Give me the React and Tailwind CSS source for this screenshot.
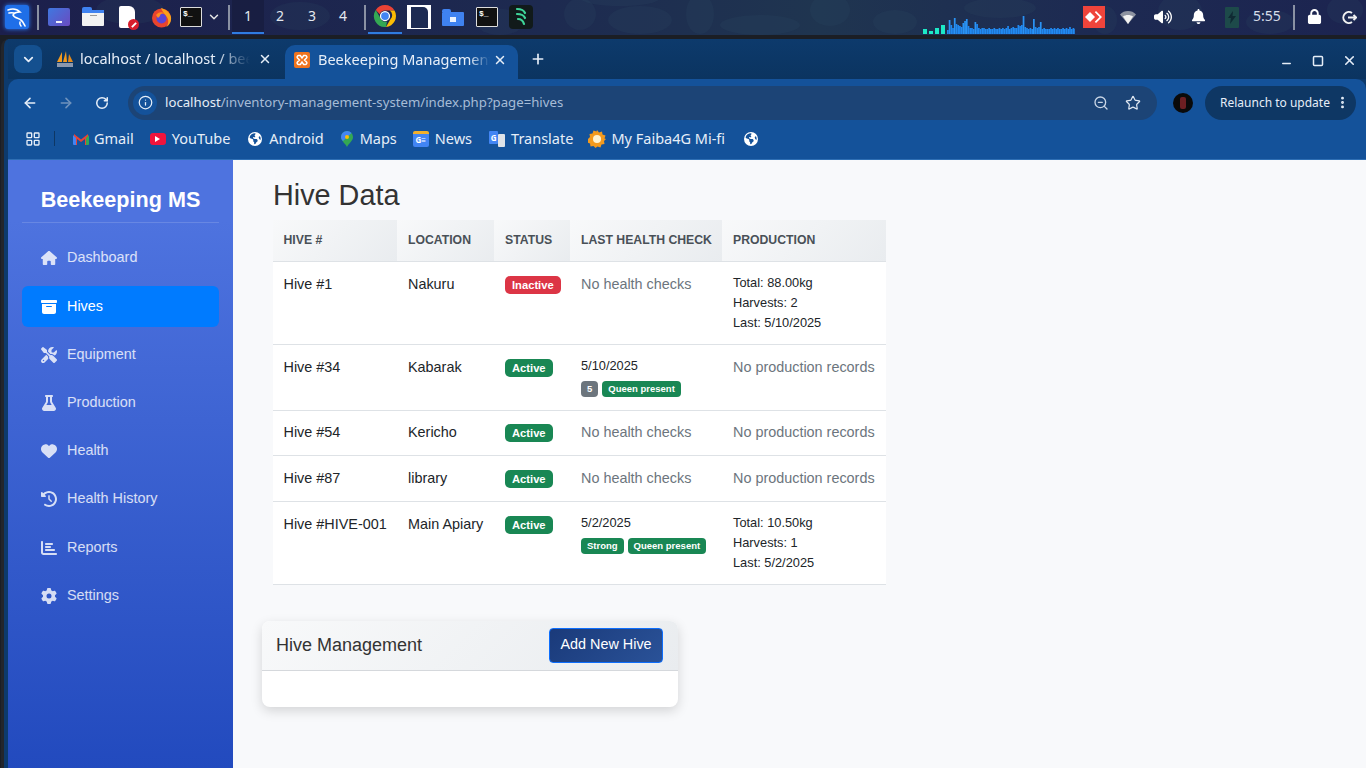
import React from "react";
import { ChevronDown, X, Plus, ArrowLeft, ArrowRight, RotateCw, Info, ZoomOut, Star, MoreVertical, Minus, Square, LayoutGrid } from "lucide-react";
import { FaHouse, FaBoxArchive, FaScrewdriverWrench, FaFlask, FaHeart, FaClockRotateLeft, FaChartBar, FaGear, FaEarthAmericas, FaLock, FaBell, FaVolumeHigh } from "react-icons/fa6";

const nav = [
  ["Dashboard", FaHouse, "h-[41px] mt-[14px]"],
  ["Hives", FaBoxArchive, "h-[41px] mt-[8px]"],
  ["Equipment", FaScrewdriverWrench, "h-[41px] mt-[7px]"],
  ["Production", FaFlask, "h-[41px] mt-[7px]"],
  ["Health", FaHeart, "h-[41px] mt-[7px]"],
  ["Health History", FaClockRotateLeft, "h-[41px] mt-[7px]"],
  ["Reports", FaChartBar, "h-[41px] mt-[8px]"],
  ["Settings", FaGear, "h-[41px] mt-[7px]"],
];

const bars = [4,14,9,6,16,10,9,8,7,11,13,15,8,6,6,5,12,10,6,5,6,6,5,5,6,5,5,6,5,5,6,5,6,5,6,8,5,6,7,6,6,9,8,9,18,7,6,5,6,5,15,7,6,7,12,5,6,5,5,5,6,5,6,5,6,5,5,6,5,6,5,7,5,6,5];

function Graph() {
  return (
    <svg width="152" height="18" viewBox="0 0 152 18" className="shrink-0 mt-[16px]">
      {[[0,5],[6,3],[12,6],[18,9]].map(([x,h],i)=><rect key={i} x={x} y={18-h} width="4" height={h} fill="#1de9c6"/>)}
      {bars.map((h,i)=><rect key={i} x={24+i*1.72} y={18-h} width="1.72" height={h} fill={h>10?"#2a93f5":"#2189f0"}/>)}
    </svg>
  );
}

function Wallpaper() {
  return (
    <svg className="absolute inset-0 pointer-events-none" width="1366" height="35" viewBox="0 0 1366 35">
      <g fill="#2f4a62" fillOpacity="0.2">
        <ellipse cx="640" cy="20" rx="32" ry="14"/><ellipse cx="620" cy="-2" rx="40" ry="8"/><ellipse cx="700" cy="14" rx="14" ry="20"/>
        <ellipse cx="760" cy="25" rx="40" ry="10"/><ellipse cx="830" cy="10" rx="20" ry="16"/><ellipse cx="895" cy="22" rx="22" ry="12"/>
        <ellipse cx="580" cy="14" rx="16" ry="16"/><ellipse cx="1000" cy="8" rx="36" ry="10"/><ellipse cx="1105" cy="20" rx="12" ry="14"/>
        <ellipse cx="1180" cy="12" rx="22" ry="18"/><ellipse cx="1270" cy="22" rx="24" ry="12"/><ellipse cx="1345" cy="10" rx="18" ry="14"/>
        <ellipse cx="500" cy="22" rx="24" ry="13"/><ellipse cx="130" cy="10" rx="34" ry="14"/><ellipse cx="300" cy="16" rx="30" ry="14"/>
      </g>
    </svg>
  );
}

function Kali() {
  return (
    <div className="absolute left-[5px] top-[5px] w-[24px] h-[24px] rounded-[3px] bg-[#1f6fe8] shadow-[0_0_4px_#2a7fff] flex items-center justify-center">
      <svg width="22" height="22" viewBox="0 0 22 22" fill="none" stroke="white" strokeWidth="1.6" strokeLinecap="round">
        <path d="M2 4c5-2 9-1 12 2-3 0-6 1-7 3 1 3 5 3 8 5 2 1.5 3 4 4 6"/><path d="M3 7c2-.5 3-.5 5 0"/><path d="M14 16c-.5 1.5 0 3 1 4"/>
      </svg>
    </div>
  );
}

function Chrome() {
  return (
    <svg width="24" height="24" viewBox="0 0 48 48">
      <path d="M24 2a22 22 0 0 1 19 11H24a11 11 0 0 0-10.400 7.400L5.500 12A22 22 0 0 1 24 2z" fill="#ea4335"/>
      <path d="M43 13a22 22 0 0 1-17 33l9.500-16.500a11 11 0 0 0-2-16.500z" fill="#fbbc04"/>
      <path d="M26 46A22 22 0 0 1 5.500 12l9.500 16.500a11 11 0 0 0 13 6.500z" fill="#34a853"/>
      <circle cx="24" cy="24" r="9" fill="#4285f4" stroke="white" strokeWidth="2.500"/>
    </svg>
  );
}

function Term({ x }) {
  return (
    <div style={{ left: x }} className="absolute top-[7px] w-[22px] h-[20px] bg-[#111] border border-[#ddd] rounded-[1px] font-['Liberation_Mono',monospace] text-[8px] leading-[12px] pl-[2px] text-white font-bold">$_</div>
  );
}

function Taskbar() {
  const seps = ["left-[37px]", "left-[228px]", "left-[364px]", "left-[1293px]"];
  return (
    <div className="relative h-[35px] shrink-0 bg-[linear-gradient(90deg,#1c1f4c_0%,#1d2a50_40%,#1f3550_60%,#1d2a52_80%,#1c2450_100%)] font-['Noto_Sans',sans-serif] text-[#e3e8ef]">
      <Wallpaper />
      <Kali />
      {seps.map((s) => <div key={s} className={`absolute top-[5px] h-[25px] w-[2px] bg-[#8a91a3] ${s}`} />)}
      <div className="absolute left-[48px] top-[8px] w-[22px] h-[18px] rounded-[2px] bg-[linear-gradient(135deg,#3f78e0,#6a4bc0)] flex items-end justify-center"><div className="w-[6px] h-[2px] mb-[3px] bg-white/90" /></div>
      <div className="absolute left-[82px] top-[7px] w-[22px] h-[20px]">
        <div className="w-[10px] h-[4px] rounded-t-[2px] bg-[#3f82f0]" />
        <div className="h-[3px] bg-[#3f82f0] -mt-[1px]" />
        <div className="h-[13px] bg-[#f2f2f2] rounded-b-[1px] flex justify-center"><div className="w-[7px] h-[1px] mt-[2px] bg-[#9a9a9a]" /></div>
      </div>
      <div className="absolute left-[119px] top-[6px] w-[16px] h-[22px] bg-white rounded-[2px] rounded-tr-[6px]" />
      <div className="absolute left-[128px] top-[19px] w-[11px] h-[11px] rounded-full bg-[#d81e2c] flex items-center justify-center"><div className="w-[6px] h-[2px] bg-white -rotate-45" /></div>
      <svg className="absolute left-[151px] top-[7px]" width="21" height="21" viewBox="0 0 21 21">
        <circle cx="10.500" cy="11" r="9.500" fill="#e8442d"/><path d="M10 1c4 1 9 4 10 9 .5 4-1 8-5 10 3-3 3-8 0-11-1-2-3-3-5-8z" fill="#f9a11b"/><circle cx="10.500" cy="11.500" r="5" fill="#5a45d6"/><path d="M5 8c2-3 6-4 9-1-3-1-5 0-5 2l-2 2z" fill="#ff8a1f"/>
      </svg>
      <Term x={180} />
      <ChevronDown size={14} strokeWidth={2.5} className="absolute left-[207px] top-[10px] text-[#e6e6e6]" />
      <div className="absolute left-[232px] top-0 h-[34px] w-[32px] bg-[#161b3a]/60 border-b-2 border-[#2f7ce0]" />
      {[["1","left-[232px]"],["2","left-[264px]"],["3","left-[296px]"],["4","left-[327px]"]].map(([n,c])=>(
        <div key={n} className={`absolute top-[6px] w-[32px] text-center text-[14px] leading-[20px] ${c}`}>{n}</div>
      ))}
      <div className="absolute left-[368px] top-0 h-[34px] w-[34px] border-b-2 border-[#2f7ce0] flex items-center justify-center pb-[1px]"><Chrome /></div>
      <div className="absolute left-[407px] top-[5px] w-[24px] h-[24px] bg-white flex items-center justify-center"><div className="w-[17px] h-[21px] bg-[#1c2a52] rounded-tr-[5px]" /></div>
      <div className="absolute left-[442px] top-[9px] w-[22px] h-[17px]">
        <div className="w-[9px] h-[3px] rounded-t-[2px] bg-[#3f82f0]" />
        <div className="h-[14px] bg-[#3f82f0] rounded-[1px] flex items-center justify-center"><div className="w-[6px] h-[5px] bg-white/90" /></div>
      </div>
      <Term x={476} />
      <div className="absolute left-[509px] top-[5px] w-[24px] h-[24px] rounded-[4px] bg-[#111a1a] flex items-center justify-center">
        <svg width="14" height="20" viewBox="0 0 14 20" fill="none" stroke="#3fd69a" strokeWidth="2.200" strokeLinecap="round"><path d="M3 2c4 0 7 1.500 8 4"/><path d="M3 7c4 0 7 1.500 8 4"/><path d="M4 12c3 0 5 1.500 6 5"/></svg>
      </div>
      <div className="absolute left-[923px] top-0"><Graph /></div>
      <div className="absolute left-[1083px] top-[6px] w-[22px] h-[22px] bg-[#ef443b] flex items-center justify-center">
        <svg width="18" height="12" viewBox="0 0 18 12" fill="white"><path d="M5 1l5 5-5 5-5-5z"/><path d="M11 0l6 6-6 6-1.200-1.200L14.500 6 9.800 1.200z"/></svg>
      </div>
      <svg className="absolute left-[1120px] top-[10px]" width="16" height="14" viewBox="0 0 16 14">
        <path d="M0 4.500C2 2 5 1 8 1s6 1 8 3.500L8 14z" fill="#8d93a1"/><path d="M3 6.500C4.500 5.500 6 5 8 5s3.500.5 5 1.500L8 14z" fill="#f2f2f2"/>
      </svg>
      <FaVolumeHigh size={18} className="absolute left-[1154px] top-[8px] text-white" />
      <FaBell size={15} className="absolute left-[1191px] top-[9px] text-white" />
      <div className="absolute left-[1225px] top-[7px] w-[14px] h-[21px] rounded-[1px] bg-[#1d4a4a] flex items-center justify-center">
        <svg width="8" height="13" viewBox="0 0 8 13" fill="#0f2a33"><path d="M5 0L0 7h3l-1 6 6-8H4.500z"/></svg>
      </div>
      <div className="absolute left-[1253px] top-[6px] text-[14px] leading-[20px] text-[#d6dee8]">5:55</div>
      <FaLock size={15} className="absolute left-[1307px] top-[9px] text-white" />
      <svg className="absolute left-[1342px] top-[10px]" width="15" height="15" viewBox="0 0 15 15" fill="none" stroke="#f2f2f2" strokeWidth="2"><path d="M10 3a5.500 5.500 0 1 0 0 9"/><path d="M6 7.500h8"/><path d="M11.500 5l2.500 2.500L11.500 10"/></svg>
    </div>
  );
}

function Pma() {
  return (
    <svg width="18" height="18" viewBox="0 0 18 18" className="shrink-0">
      <path d="M1 12L6 2v10z" fill="#f39a1e"/><path d="M7 12l3-11 1 11z" fill="#f39a1e"/><path d="M12 12l1-8 4 8z" fill="#e58a1a"/>
      <rect x="1" y="13" width="16" height="4" fill="#8a97ad"/>
    </svg>
  );
}

function Xampp() {
  return (
    <svg width="16" height="16" viewBox="0 0 16 16" className="shrink-0">
      <rect width="16" height="16" rx="2" fill="#f0741e"/>
      <path d="M4.500 3.500h1.800L8 6l1.700-2.500h1.800a1.500 1.500 0 0 1 1 2.500L10.500 8l2 2a1.500 1.500 0 0 1-1 2.500H9.700L8 10l-1.700 2.500H4.500a1.500 1.500 0 0 1-1-2.500l2-2-2-2a1.500 1.500 0 0 1 1-2.500z" fill="none" stroke="white" strokeWidth="1.500"/>
    </svg>
  );
}

function TabStrip() {
  return (
    <div className="relative h-[40px] shrink-0 flex items-start bg-[linear-gradient(180deg,#0d3a6c,#0b3460)] font-['Noto_Sans',sans-serif] text-[14.500px] text-[#e6eef8]">
      <div className="ml-[6px] mt-[6px] w-[28px] h-[28px] rounded-[8px] bg-[#14508f] flex items-center justify-center"><ChevronDown size={15} strokeWidth={2.8} /></div>
      <div className="ml-[14px] mt-[6px] w-[220px] h-[28px] flex items-center">
        <Pma />
        <span className="ml-[6px] w-[170px] whitespace-nowrap overflow-hidden [mask-image:linear-gradient(to_right,black_80%,transparent)]">localhost / localhost / beekeeping</span>
        <X size={14} strokeWidth={2.5} className="ml-[8px]" />
      </div>
      <div className="ml-[9px] mt-[6px] w-[233px] h-[34px] bg-[#14529a] rounded-t-[10px] flex items-center pl-[9px] pb-[4px]">
        <Xampp />
        <span className="ml-[8px] w-[172px] whitespace-nowrap overflow-hidden [mask-image:linear-gradient(to_right,black_88%,transparent)]">Beekeeping Management System</span>
        <X size={14} strokeWidth={2.5} className="ml-[3px]" />
      </div>
      <Plus size={16} strokeWidth={2.5} className="ml-[12px] mt-[12px]" />
      <div className="ml-auto flex items-center mt-[12px] mr-[9px]">
        <Minus size={13} strokeWidth={2.5} className="mr-[19px] mt-[6px]" />
        <Square size={12} strokeWidth={3} className="mr-[18px]" />
        <X size={15} strokeWidth={2.5} />
      </div>
    </div>
  );
}

function Toolbar() {
  return (
    <div className="h-[43px] shrink-0 flex items-center pt-[4px] bg-[#14529a] rounded-t-[10px] font-['Noto_Sans',sans-serif] text-[#e6eef8]">
      <ArrowLeft size={16} strokeWidth={2.4} className="ml-[14px]" />
      <ArrowRight size={16} strokeWidth={2.4} className="ml-[20px] text-[#6f92bd]" />
      <RotateCw size={14} strokeWidth={2.6} className="ml-[21px]" />
      <div className="ml-[19px] w-[1029px] h-[34px] rounded-full bg-[#1c4476] flex items-center pl-[5px]">
        <div className="w-[24px] h-[24px] rounded-full bg-[#14529a] flex items-center justify-center"><Info size={15} /></div>
        <span className="ml-[8px] text-[13.200px]">localhost<span className="text-[#a6bcd6]">/inventory-management-system/index.php?page=hives</span></span>
        <ZoomOut size={16} className="ml-auto text-[#c9d6e6]" />
        <Star size={16} strokeWidth={1.8} className="ml-[16px] mr-[16px] text-[#dfe7f1]" />
      </div>
      <div className="ml-[16px] w-[20px] h-[20px] rounded-full bg-[#0a0a0a] flex items-center justify-center"><div className="w-[6px] h-[12px] rounded-[2px] bg-[#6d1f22]" /></div>
      <div className="ml-[12px] w-[151px] h-[34px] rounded-full bg-[#0e3764] flex items-center pl-[15px] text-[12px]">
        Relaunch to update
        <MoreVertical size={15} strokeWidth={2.6} className="ml-[5px]" />
      </div>
    </div>
  );
}

function Bookmarks() {
  return (
    <div className="h-[38px] shrink-0 flex items-center pb-[4px] bg-[#14529a] border-b border-[#2f6fb4] font-['Noto_Sans',sans-serif] text-[14.500px] text-[#e6eef8]">
      <LayoutGrid size={16} className="ml-[17px]" />
      <div className="ml-[13px] w-[1px] h-[15px] bg-[#0e3764]" />
      <svg className="ml-[18px]" width="16" height="12" viewBox="0 0 16 12"><path d="M1 12V1l7 5.500L15 1v11h-3V6L8 9 4 6v6z" fill="#ea4335"/><path d="M0 2v9a1 1 0 0 0 1 1h2V5z" fill="#4285f4"/><path d="M16 2v9a1 1 0 0 1-1 1h-2V5z" fill="#34a853"/></svg>
      <span className="ml-[5px]">Gmail</span>
      <div className="ml-[16px] w-[16px] h-[12px] rounded-[3px] bg-[#f0143c] flex items-center justify-center"><div className="w-0 h-0 border-y-[3px] border-y-transparent border-l-[5px] border-l-white" /></div>
      <span className="ml-[6px]">YouTube</span>
      <FaEarthAmericas size={14} className="ml-[18px] text-white" />
      <span className="ml-[7px]">Android</span>
      <svg className="ml-[17px]" width="12" height="16" viewBox="0 0 12 16"><path d="M6 0a6 6 0 0 1 6 6c0 4-4 6-6 10C4 12 0 10 0 6a6 6 0 0 1 6-6z" fill="#34a853"/><path d="M6 0a6 6 0 0 1 4.500 2L2 10C.6 8.500 0 7.500 0 6a6 6 0 0 1 6-6z" fill="#4285f4"/><circle cx="6" cy="6" r="2" fill="#fbbc04"/></svg>
      <span className="ml-[7px]">Maps</span>
      <div className="ml-[16px] w-[16px] h-[16px] rounded-[2px] bg-[#4285f4] border-t-[3px] border-t-[#f3b02b] text-[8px] leading-[11px] font-bold text-center text-white">G≡</div>
      <span className="ml-[6px]">News</span>
      <div className="ml-[17px] flex w-[16px] h-[16px] shrink-0"><div className="w-[9px] h-[13px] bg-[#4285f4] rounded-[1px] text-[8px] leading-[13px] text-center font-bold text-white">G</div><div className="w-[7px] h-[13px] mt-[3px] bg-[#dfe3e8] rounded-[1px]" /></div>
      <span className="ml-[6px]">Translate</span>
      <svg className="ml-[15px]" width="18" height="18" viewBox="0 0 18 18"><path d="M9 0l2 2.500 3-1 .5 3 3 1-1 3L18 9l-2 2 .5 3-3 .5-1 3-3-1-2 1.500-2-2-3 .5-.5-3-3-1 1-3L0 9l2-2-.5-3 3-.5 1-3 3 1z" fill="#f39a1e"/><circle cx="9" cy="9" r="4" fill="#fff3d0"/></svg>
      <span className="ml-[5px]">My Faiba4G Mi-fi</span>
      <FaEarthAmericas size={14} className="ml-[19px] text-white" />
    </div>
  );
}

function Sidebar() {
  return (
    <aside className="w-[225px] shrink-0 h-full bg-[linear-gradient(180deg,#4e73df_10%,#224abe_100%)] px-[14px] font-['Liberation_Sans',sans-serif]">
      <div className="h-[63px] pt-[25px] text-center text-[21.600px] leading-[30px] font-bold text-white border-b border-white/15">Beekeeping MS</div>
      {nav.map(([label, Icon, cls]) => {
        const active = label === "Hives";
        return (
          <div key={label} className={`flex items-center pl-[19px] rounded-[6px] text-[14.400px] ${cls} ${active ? "bg-[#007bff] text-white" : "text-white/80"}`}>
            <span className="w-[16px] flex justify-center shrink-0"><Icon size={label === "Dashboard" ? 18 : 16} /></span>
            <span className="ml-[10px]">{label}</span>
          </div>
        );
      })}
    </aside>
  );
}

function Badge({ color, small, children }) {
  return (
    <span className={`inline-block font-bold text-white text-center ${color} ${small ? "text-[9.500px] leading-[16px] h-[16px] px-[6px] rounded-[4px]" : "text-[11.200px] leading-[18px] h-[18px] px-[7px] rounded-[5px]"}`}>{children}</span>
  );
}

const green = "bg-[#198754]", red = "bg-[#dc3545]", gray = "bg-[#6c757d]";
const Muted = ({ children }) => <span className="text-[#6c757d]">{children}</span>;
const Prod = ({ lines }) => <div className="text-[12.800px] leading-[20px] text-[#212529] -mt-[1px]">{lines.map((l) => <div key={l}>{l}</div>)}</div>;
const Health = ({ date, tags }) => (
  <div className="text-[12.800px] leading-[20px] text-[#212529] -mt-[1px]">
    <div>{date}</div>
    <div className="flex gap-[4px] mt-[5px]">{tags.map(([t, c]) => <Badge key={t} small color={c}>{t}</Badge>)}</div>
  </div>
);

const rows = [
  { h: "h-[83px]", id: "Hive #1", loc: "Nakuru", st: "Inactive", hc: <Muted>No health checks</Muted>, pr: <Prod lines={["Total: 88.00kg", "Harvests: 2", "Last: 5/10/2025"]} /> },
  { h: "h-[66px]", id: "Hive #34", loc: "Kabarak", st: "Active", hc: <Health date="5/10/2025" tags={[["5", gray], ["Queen present", green]]} />, pr: <Muted>No production records</Muted> },
  { h: "h-[45px]", id: "Hive #54", loc: "Kericho", st: "Active", hc: <Muted>No health checks</Muted>, pr: <Muted>No production records</Muted> },
  { h: "h-[46px]", id: "Hive #87", loc: "library", st: "Active", hc: <Muted>No health checks</Muted>, pr: <Muted>No production records</Muted> },
  { h: "h-[83px]", id: "Hive #HIVE-001", loc: "Main Apiary", st: "Active", hc: <Health date="5/2/2025" tags={[["Strong", green], ["Queen present", green]]} />, pr: <Prod lines={["Total: 10.50kg", "Harvests: 1", "Last: 5/2/2025"]} /> },
];

function HiveTable() {
  const th = "pl-[11px] first:pl-[10.500px] pr-[10px] text-left align-middle text-[12.240px] font-bold uppercase text-[#495057] bg-[linear-gradient(135deg,#f8f9fa,#e9ecef)] border-b border-[#dee2e6]";
  const td = "pl-[11px] first:pl-[10.500px] pr-[10px] align-top border-b border-[#dee2e6]";
  return (
    <table className="ml-[11px] w-[613px] table-fixed border-collapse bg-white text-[14.400px] leading-[20px] text-[#212529]">
      <colgroup><col className="w-[124px]" /><col className="w-[97px]" /><col className="w-[76px]" /><col className="w-[152px]" /><col className="w-[164px]" /></colgroup>
      <thead>
        <tr className="h-[41px]">
          {["Hive #", "Location", "Status", "Last Health Check", "Production"].map((t) => <th key={t} className={`${th} whitespace-nowrap`}>{t}</th>)}
        </tr>
      </thead>
      <tbody>
        {rows.map((r) => {
          const pad = r.id === "Hive #54" ? "pt-[11px]" : "pt-[12px]";
          return (
            <tr key={r.id} className={r.h}>
              <td className={`${td} ${pad} whitespace-nowrap`}>{r.id}</td>
              <td className={`${td} ${pad} whitespace-nowrap`}>{r.loc}</td>
              <td className={`${td} ${pad}`}><Badge color={r.st === "Active" ? green : red}>{r.st}</Badge></td>
              <td className={`${td} ${pad} whitespace-nowrap`}>{r.hc}</td>
              <td className={`${td} ${pad} whitespace-nowrap`}>{r.pr}</td>
            </tr>
          );
        })}
      </tbody>
    </table>
  );
}

export default function App() {
  return (
    <div className="w-[1366px] h-[768px] overflow-hidden flex flex-col bg-[#1b1e25]">
      <Taskbar />
      <div className="ml-[1px] mt-[4px] flex-1 min-h-0 flex flex-col bg-[#0d3a6c] rounded-tl-[8px] border-l-[3px] border-[#23262c] pl-[4px]">
        <TabStrip />
        <Toolbar />
        <Bookmarks />
        <div className="flex-1 min-h-0 flex bg-[#f8f9fb]">
          <Sidebar />
          <main className="flex-1 min-w-0 pl-[29px] font-['Liberation_Sans',sans-serif]">
            <h1 className="ml-[11px] mt-[18px] h-[42px] text-[28.800px] leading-[34px] font-normal text-[#333]">Hive Data</h1>
            <HiveTable />
            <section className="mt-[36px] w-[416px] h-[86px] rounded-[8px] bg-white shadow-[0_4px_12px_rgba(0,0,0,0.15)] overflow-hidden">
              <div className="h-[50px] flex items-center justify-between pl-[14px] pr-[15px] bg-[linear-gradient(135deg,#f8f9fa,#e9ecef)] border-b border-[#d5d8dc]">
                <span className="text-[18px] text-[#333]">Hive Management</span>
                <span className="w-[114px] h-[35px] flex items-center justify-center rounded-[4px] border border-[#0d6efd] bg-[linear-gradient(135deg,#1a3a7a,#2a5298)] text-[14.400px] text-white">Add New Hive</span>
              </div>
            </section>
          </main>
        </div>
      </div>
    </div>
  );
}
